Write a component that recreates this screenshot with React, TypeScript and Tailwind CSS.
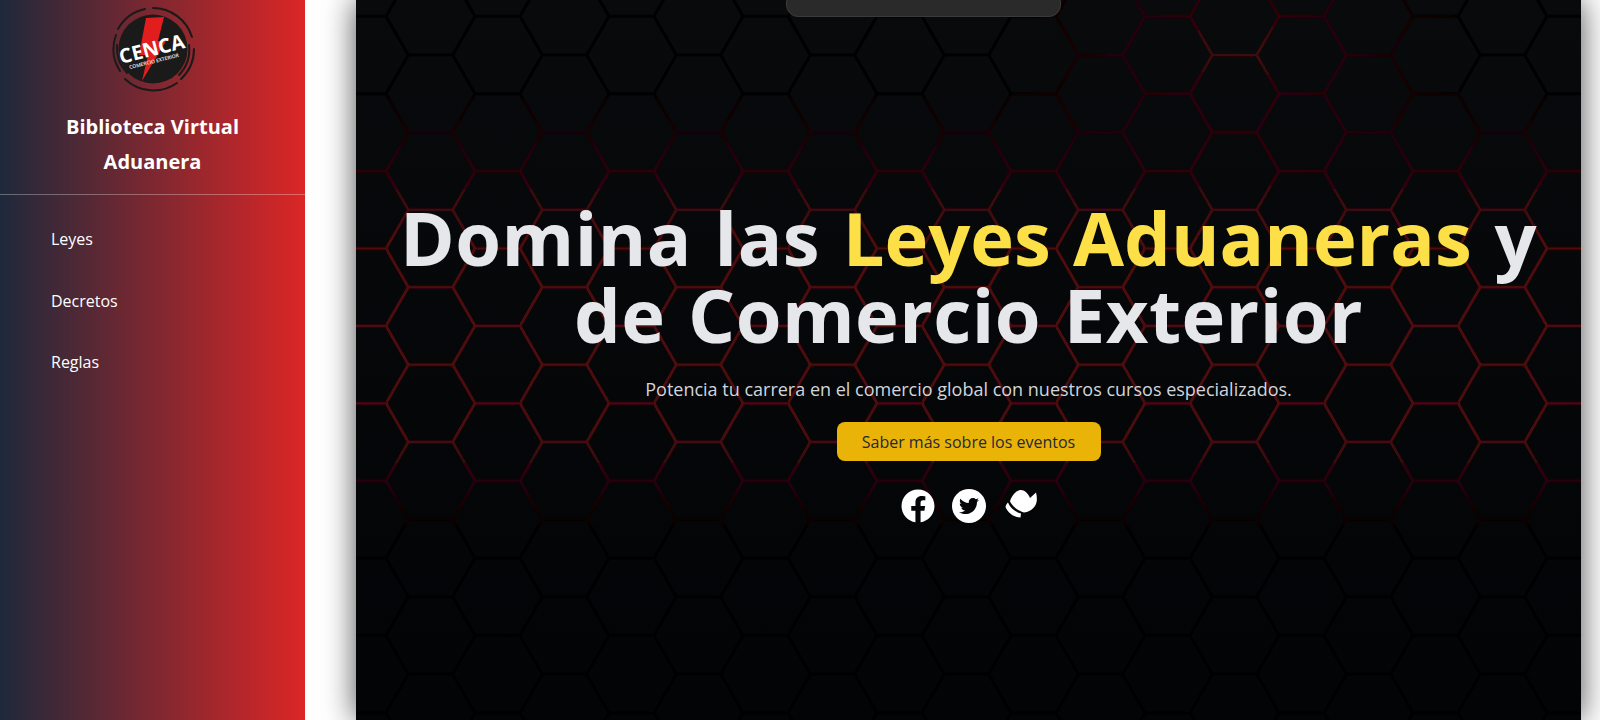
import { FaFacebook, FaTwitter } from "react-icons/fa";

function Logo() {
  return (
    <svg width="88" height="88" viewBox="0 0 88 88">
      <circle cx="44" cy="44" r="34.5" fill="#1a1a1a" />
      <g fill="none" stroke="#1a1a1a" strokeWidth="2" strokeLinecap="round">
        <path d="M44 3A41 41 0 0 1 83 32" />
        <path d="M85 44A41 41 0 0 1 72 74" />
        <path d="M68 78A41 41 0 0 1 16 74" />
        <path d="M11 66A41 41 0 0 1 7 30" />
        <path d="M9 24A41 41 0 0 1 36 4" />
        <path d="M80 40A37 37 0 0 1 70 70" />
        <path d="M18 68A37 37 0 0 1 8 40" />
      </g>
      <path d="M37 13L55 12L49 36L57 36L33 76L39 50L30 50Z" fill="#e11d1d" />
      <text x="43" y="51" textAnchor="middle" transform="rotate(-14 43 45)" fill="#fff" fontFamily="Open Sans, sans-serif" fontWeight="700" fontSize="20">CENCA</text>
      <text x="45" y="58" textAnchor="middle" transform="rotate(-14 45 56)" fill="#eee" fontFamily="Open Sans, sans-serif" fontWeight="600" fontSize="5">COMERCIO EXTERIOR</text>
    </svg>
  );
}

const HEX = "M0 38.7L22.3 0H66.7L89 38.7L66.7 77.4H22.3ZM89 38.7H134";

function Hexes() {
  return (
    <svg className="absolute inset-0 h-full w-full" aria-hidden="true">
      <defs>
        <pattern id="hexDark" width="134" height="77.4" patternUnits="userSpaceOnUse" x="30" y="55">
          <path d={HEX} fill="none" stroke="#020304" strokeWidth="3" />
        </pattern>
        <pattern id="hexRed" width="134" height="77.4" patternUnits="userSpaceOnUse" x="30" y="55">
          <path d={HEX} fill="none" stroke="#5c0a0f" strokeWidth="3" />
        </pattern>
        <linearGradient id="band" x1="0" y1="0" x2="0" y2="1">
          <stop offset="0.12" stopColor="#fff" stopOpacity="0" />
          <stop offset="0.34" stopColor="#fff" stopOpacity="0.85" />
          <stop offset="0.6" stopColor="#fff" stopOpacity="0.8" />
          <stop offset="0.74" stopColor="#fff" stopOpacity="0" />
        </linearGradient>
        <radialGradient id="blob" cx="0.72" cy="0.07" r="0.2">
          <stop offset="0" stopColor="#fff" stopOpacity="0.7" />
          <stop offset="1" stopColor="#fff" stopOpacity="0" />
        </radialGradient>
        <mask id="m">
          <rect width="100%" height="100%" fill="url(#band)" />
          <rect width="100%" height="100%" fill="url(#blob)" />
        </mask>
        <filter id="soft" x="0" y="0" width="100%" height="100%">
          <feGaussianBlur stdDeviation="0.7" />
        </filter>
      </defs>
      <g filter="url(#soft)">
        <rect width="100%" height="100%" fill="url(#hexDark)" />
        <rect width="100%" height="100%" fill="url(#hexRed)" mask="url(#m)" />
      </g>
    </svg>
  );
}

export default function App() {
  return (
    <div className="flex h-[720px] overflow-hidden bg-white font-['Open_Sans',sans-serif]">
      <aside className="flex w-[305px] shrink-0 flex-col bg-linear-to-r/srgb from-[#1e293b] to-[#dc2626] text-white">
        <div className="flex h-[195px] flex-col items-center border-b border-white/30 pt-[5px]">
          <Logo />
          <h1 className="mt-[16px] w-[220px] text-center text-xl leading-[35px] font-bold">Biblioteca Virtual Aduanera</h1>
        </div>
        <nav className="flex flex-col gap-[37.5px] pt-[32px] pl-[51px] text-base">
          <a>Leyes</a>
          <a>Decretos</a>
          <a>Reglas</a>
        </nav>
      </aside>
      <main className="relative ml-[51px] flex h-full w-[1225px] shrink-0 flex-col items-center bg-linear-to-b from-[#080a0c] to-[#030406] shadow-[0_0_30px_rgba(0,0,0,0.7)]">
        <Hexes />
        <div className="absolute top-[-10px] left-[430px] h-[27px] w-[275px] rounded-xl border border-[#3a3a3a] bg-[#2a2a2a]" />
        <div className="relative flex flex-col items-center pt-[199px] text-center">
          <h2 className="w-[1180px] text-[74px] leading-[77px] font-bold tracking-[0.45px] [word-spacing:3px] text-[#e5e7eb]">
            Domina las <span className="tracking-normal text-[#fde047]">Leyes Aduaneras</span> y de Comercio Exterior
          </h2>
          <p className="mt-[22px] text-lg text-[#d1d5db]">Potencia tu carrera en el comercio global con nuestros cursos especializados.</p>
          <button className="mt-[19px] h-[39px] w-[264px] rounded-lg bg-[#eab308] text-base text-[#1f2937]">Saber más sobre los eventos</button>
          <div className="mt-[28px] flex items-center gap-[17px] text-white">
            <FaFacebook className="h-[34px] w-[34px]" />
            <div className="flex h-[34px] w-[34px] items-center justify-center rounded-full bg-white">
              <FaTwitter className="h-[20px] w-[20px] text-[#050608]" />
            </div>
            <svg viewBox="0 0 34 34" className="-mt-[3px] h-[34px] w-[34px]">
              <path d="M7 13.500C8 9 12 3 17 2C21 1.500 25 5 27 10L33 4.500C34.500 10 34 15 32 18C29 22 26 24 21 24.500C15 23 10 19 7 13.500Z" fill="#fff" />
              <path d="M2.500 19C3 17 4 15 5 14.500C7.500 20 12 24 18 25.500L17.500 29.500C11 29.500 5 25 2.500 19Z" fill="#fff" />
            </svg>
          </div>
        </div>
      </main>
    </div>
  );
}
